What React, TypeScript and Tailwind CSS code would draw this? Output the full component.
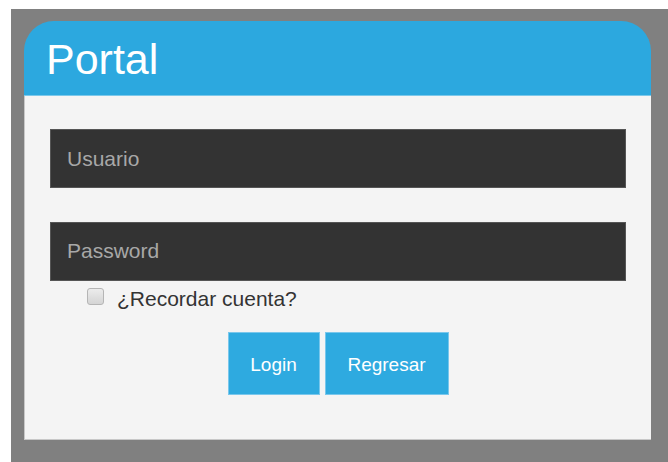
import React from "react";

// Login card: blue header strip, dark inputs, remember checkbox and two action buttons
export default function App() {
  return (
    <div className="min-h-[462px] bg-white pt-[9px] pl-[11px] font-['Liberation_Sans',Arial,sans-serif]">
      <div className="bg-[#808080] pt-[12px] pl-[13px] pr-[17px] pb-[23px] min-h-[453px]">
        <div className="w-[627px]">
          <div className="h-[75px] rounded-t-[30px] bg-[#2ca8df] border-b border-[#7cc8ea] flex items-center pl-[22px]">
            <h1 className="text-[43px] leading-none text-white pt-[2px]">Portal</h1>
          </div>
          <div className="h-[344px] bg-[#f4f4f4] border-l border-b border-[#c8c8c8] pt-[33px] pl-[25px]">
            <input
              type="text"
              placeholder="Usuario"
              className="block w-[576px] h-[59px] bg-[#333333] border border-[#555] px-[16px] text-[21px] text-white placeholder:text-[#a8a8a8] outline-none"
            />
            <input
              type="password"
              placeholder="Password"
              className="block mt-[34px] w-[576px] h-[59px] bg-[#333333] border border-[#555] px-[16px] pb-[2px] text-[21px] text-white placeholder:text-[#a8a8a8] outline-none"
            />
            <label className="flex items-center mt-[4px] ml-[37px] text-[21px] text-[#333]">
              <span className="w-[17px] h-[17px] rounded-[3px] border border-[#b5b5b5] bg-gradient-to-b from-[#ececec] to-[#d4d4d4] mb-[3px]" />
              <span className="ml-[13px] leading-[24px] pt-[2px]">¿Recordar cuenta?</span>
            </label>
            <div className="flex justify-center gap-[5px] mt-[21px] pr-[25px]">
              <button className="w-[92px] h-[63px] pt-[3px] bg-[#2eaae0] border border-[#79c7ec] text-white text-[19px]">
                Login
              </button>
              <button className="w-[124px] h-[63px] pt-[3px] bg-[#2eaae0] border border-[#79c7ec] text-white text-[19px]">
                Regresar
              </button>
            </div>
          </div>
        </div>
      </div>
    </div>
  );
}
